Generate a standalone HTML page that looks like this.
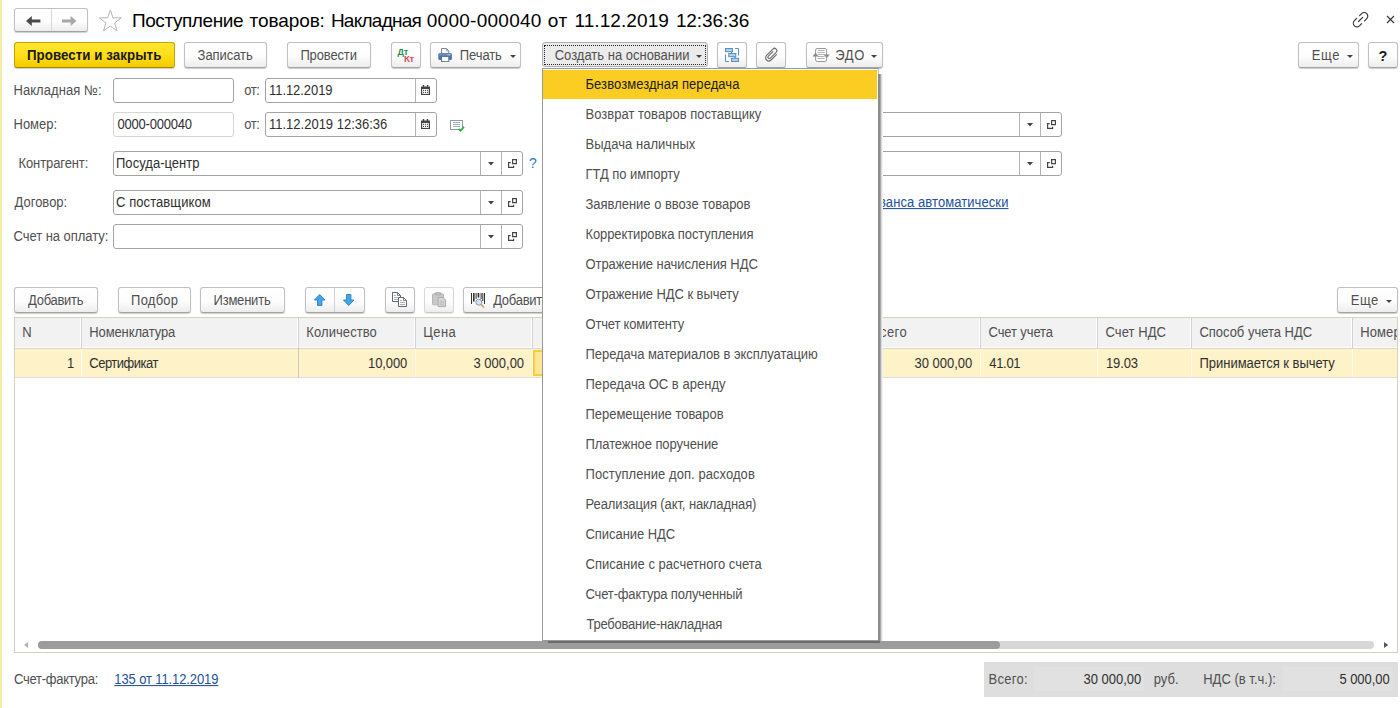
<!DOCTYPE html>
<html lang="ru">
<head>
<meta charset="utf-8">
<title>Поступление товаров</title>
<style>
*{box-sizing:border-box;margin:0;padding:0}
html,body{width:1400px;height:708px;overflow:hidden;background:#fff}
body{font-family:"Liberation Sans",sans-serif;font-size:13px;color:#333;position:relative}
.abs,svg{position:absolute}
#lstripe{left:0;top:0;width:2px;height:708px;background:#f5ecaa}
.btn{position:absolute;height:26px;top:42px;border:1px solid #c0c0c0;border-bottom-color:#a3a3a3;border-radius:3px;
 background:linear-gradient(#ffffff 0%,#fdfdfd 55%,#ededed 100%);box-shadow:0 1px 1px rgba(0,0,0,.2)}
.btn.y{background:linear-gradient(#ffe733 0%,#ffde17 50%,#f3cb00 100%);border-color:#c7a300;border-bottom-color:#a68800}
.btn.pressed{background:#ebebeb;border-color:#b0b0b0;box-shadow:none;height:25px}
.btn.dis{border-color:#d8d8d8;border-bottom-color:#c8c8c8;box-shadow:0 1px 1px rgba(0,0,0,.1)}
.t{position:absolute;white-space:nowrap;font-size:13px;line-height:16px;color:#505050;transform:scaleY(1.06);transform-origin:0 12.3px}
.caret{position:absolute;width:0;height:0;border-left:3px solid transparent;border-right:3px solid transparent;border-top:3px solid #444}
.inp{position:absolute;height:25px;border:1px solid #a3a3a3;border-radius:3px;background:#fff}
.inp.ro{border-color:#d6d6d6}
.inp .seg{position:absolute;top:0;bottom:0;border-left:1px solid #b4b4b4;width:21px}
.inp .car{position:absolute;top:10px;right:29px;width:0;height:0;border-left:2.5px solid transparent;border-right:2.5px solid transparent;border-top:3px solid #444}
a.t{color:#24509c;text-decoration:underline}
.tb{top:287px}
#grid{position:absolute;left:14px;top:317px;width:1384px;height:336px;border:1px solid #d3d1c0;background:#fff;overflow:hidden}
.hc{position:absolute;top:0;height:29px;background:#f2f2f2}
.vs{position:absolute;top:0;height:30px;width:1px;background:#d2d2d2;border:0}
.vr{position:absolute;top:32px;height:28px;width:1px;background:#fffaf0}
#menu{position:absolute;left:542px;top:68px;width:337px;height:573px;background:#fff;border:1px solid #9a9a9a;border-right-color:#bdbdbd}
#menu .sel{position:absolute;left:0;right:1px;top:1px;height:29px;background:#fbcc22}
</style>
</head>
<body>
<div id="lstripe" class="abs"></div>
<div class="btn" style="left:14px;top:8px;width:74px;height:24px;"></div>
<div class="abs" style="left:51px;top:9px;width:1px;height:22px;background:#d9d9d9"></div>
<svg style="left:26px;top:15.5px" width="15" height="10" viewBox="0 0 15 10" ><path d="M5.8 0 L0 5 L5.8 10 L5.8 6.4 L14.4 6.4 L14.4 3.6 L5.8 3.6 Z" fill="#4a4a4a"/></svg>
<svg style="left:62px;top:15.5px" width="15" height="10" viewBox="0 0 15 10" ><path d="M8.6 0 L14.4 5 L8.6 10 L8.6 6.4 L0 6.4 L0 3.6 L8.6 3.6 Z" fill="#a8a8a8"/></svg>
<svg style="left:98px;top:8px" width="25" height="25" viewBox="0 0 25 25" ><path d="M12.3 2 L15 9.8 L23.2 9.9 L16.7 14.9 L19.1 22.8 L12.3 18.1 L5.5 22.8 L7.9 14.9 L1.4 9.9 L9.6 9.8 Z" fill="#fff" stroke="#b5b5b5" stroke-width="1"/></svg>
<div class="t" style="left:132.0px;top:10px;letter-spacing:-0.43px;font-size:19px;color:#000;line-height:22px;transform:none;">Поступление</div>
<div class="t" style="left:249.6px;top:10px;letter-spacing:-0.1px;font-size:19px;color:#000;line-height:22px;transform:none;">товаров:</div>
<div class="t" style="left:330.9px;top:10px;letter-spacing:-0.74px;font-size:19px;color:#000;line-height:22px;transform:none;">Накладная</div>
<div class="t" style="left:426.8px;top:10px;letter-spacing:0.26px;font-size:19px;color:#000;line-height:22px;transform:none;">0000-000040</div>
<div class="t" style="left:547.7px;top:10px;letter-spacing:0.7px;font-size:19px;color:#000;line-height:22px;transform:none;">от</div>
<div class="t" style="left:574.4px;top:10px;letter-spacing:0.09px;font-size:19px;color:#000;line-height:22px;transform:none;">11.12.2019</div>
<div class="t" style="left:675.9px;top:10px;letter-spacing:-0.09px;font-size:19px;color:#000;line-height:22px;transform:none;">12:36:36</div>
<svg style="left:1351px;top:10px" width="19" height="19" viewBox="0 0 19 19" ><g fill="none" stroke="#3a3a3a" stroke-width="1.2" stroke-linecap="round"><path d="M8.6 5.6 L10.6 3.6 A3.6 3.6 0 0 1 15.7 8.7 L13.5 10.9"/><path d="M5.6 8.5 L3.4 10.7 A3.6 3.6 0 0 0 8.5 15.8 L10.6 13.7"/><path d="M7.5 11.5 L11.6 7.4"/></g></svg>
<svg style="left:1386px;top:15px" width="9" height="9" viewBox="0 0 9 9" ><path d="M1 1 L8 8 M8 1 L1 8" stroke="#333" stroke-width="1.1" fill="none"/></svg>
<div class="btn y" style="left:14px;width:161px"></div>
<div class="t" style="left:27.0px;top:48px;letter-spacing:0.06px;font-size:13.3px;font-weight:bold;color:#1a1a1a;">Провести и закрыть</div>
<div class="btn" style="left:184px;width:83px"></div>
<div class="t" style="left:197.6px;top:48px;letter-spacing:-0.07px;">Записать</div>
<div class="btn" style="left:287px;width:84px"></div>
<div class="t" style="left:300.4px;top:48px;letter-spacing:-0.14px;">Провести</div>
<div class="btn" style="left:391px;width:30px"></div>
<div class="abs" style="left:397.5px;top:46.5px;font-size:9px;font-weight:bold;color:#1f9156;line-height:10px;letter-spacing:-0.2px">Дт</div>
<div class="abs" style="left:404px;top:53.5px;font-size:9.5px;font-weight:bold;color:#d94b58;line-height:10px;letter-spacing:-0.3px">Кт</div>
<div class="btn" style="left:430px;width:91px"></div>
<div class="t" style="left:459.8px;top:48px;letter-spacing:-0.1px;">Печать</div>
<div class="caret" style="left:509.5px;top:54.5px"></div>
<svg style="left:438px;top:48px" width="14" height="14" viewBox="0 0 14 14" ><path d="M3.5 0.5 H8.5 L10.8 2.8 V6 H3.5 Z" fill="#fff" stroke="#7f8a99" stroke-width="1"/><path d="M8.5 0.5 V2.8 H10.8" fill="none" stroke="#7f8a99" stroke-width="0.8"/><rect x="0.3" y="5" width="13.6" height="7" rx="1.6" fill="#4d74a8"/><rect x="0.9" y="5.6" width="12.4" height="2" rx="1" fill="#6f93c4"/><rect x="9.6" y="6.3" width="1" height="1" fill="#dfe9f7"/><rect x="11.2" y="6.3" width="1" height="1" fill="#dfe9f7"/><rect x="3.5" y="8.6" width="7.3" height="5" fill="#fff" stroke="#5a6f8f" stroke-width="0.9"/></svg>
<div class="btn pressed" style="left:542px;width:166px"></div>
<div class="abs" style="left:544px;top:45px;width:162px;height:20px;border:1px dotted #222"></div>
<div class="t" style="left:554.7px;top:48px;letter-spacing:0.0px;">Создать на основании</div>
<div class="caret" style="left:696px;top:54.5px"></div>
<div class="btn" style="left:717px;width:30px"></div>
<svg style="left:725px;top:48px" width="14" height="14" viewBox="0 0 14 14" ><g fill="none" stroke="#5d8fb8" stroke-width="1"><path d="M6.5 4 V5.5 M10 9 V10.5"/><path d="M10 0.5 H13.5 V7.5"/><path d="M0.5 6.5 V13.5 H3.8"/></g><g fill="#aad3f7" stroke="#5d8fb8" stroke-width="1"><rect x="0.5" y="0.5" width="7" height="3.2"/><rect x="3.8" y="5.5" width="7" height="3.2"/><rect x="6.5" y="10.3" width="7" height="3.2"/></g></svg>
<div class="btn" style="left:756px;width:30px"></div>
<svg style="left:763px;top:47px" width="16" height="17" viewBox="0 0 16 17" ><g transform="rotate(45 8 8.5)" fill="none" stroke="#707070" stroke-width="1.2" stroke-linecap="round"><path d="M11.2 4 V11.6 A3.2 3.2 0 0 1 4.8 11.6 V2.6 A2.3 2.3 0 0 1 9.4 2.6 V10.8 A1.4 1.4 0 0 1 6.6 10.8 V4.4"/></g></svg>
<div class="btn" style="left:806px;width:77px"></div>
<div class="t" style="left:835.3px;top:48px;letter-spacing:0.65px;">ЭДО</div>
<div class="caret" style="left:870.5px;top:54.5px"></div>
<svg style="left:812px;top:48px" width="18" height="14" viewBox="0 0 18 14" ><rect x="3.6" y="0.5" width="11" height="13" rx="1.6" fill="#fff" stroke="#999" stroke-width="1"/><path d="M5.6 2.5 H12.6 M5.6 4.5 H12.6 M5.6 6.5 H12.6 M5.6 8.5 H12.6 M5.6 10.5 H12.6" stroke="#b4b4b4" stroke-width="1" fill="none"/><path d="M0.4 8.4 L3.5 4.8 L6.6 8.4 Z M11.6 6.4 L14.7 10 L17.8 6.4 Z" fill="#8a8a8a"/></svg>
<div class="btn" style="left:1298px;width:61px"></div>
<div class="t" style="left:1311.8px;top:48px;letter-spacing:0.6px;">Еще</div>
<div class="caret" style="left:1346.5px;top:55px"></div>
<div class="btn" style="left:1368px;width:30px"></div>
<div class="t" style="left:1378.6px;top:47px;letter-spacing:0.0px;font-size:14.5px;font-weight:bold;color:#1a1a1a;line-height:18px;transform:none;">?</div>
<div class="t" style="left:13.5px;top:83px;letter-spacing:0.05px;">Накладная №:</div>
<div class="inp " style="left:113px;top:78px;width:121px"></div>
<div class="t" style="left:244.3px;top:83px;letter-spacing:-0.5px;">от:</div>
<div class="inp " style="left:265px;top:78px;width:172px"><div class="seg" style="right:0"></div><svg style="left:155px;top:5.7px" width="9" height="10" viewBox="0 0 9 10" ><path d="M0 1.5 H9 V10 H0 Z" fill="#444"/><rect x="1.2" y="4" width="6.6" height="4.9" fill="#fff"/><rect x="1.8" y="0" width="1.4" height="2.4" fill="#444"/><rect x="5.8" y="0" width="1.4" height="2.4" fill="#444"/><g fill="#444"><rect x="2" y="4.8" width="1.1" height="1.1"/><rect x="4" y="4.8" width="1.1" height="1.1"/><rect x="6" y="4.8" width="1.1" height="1.1"/><rect x="2" y="6.9" width="1.1" height="1.1"/><rect x="4" y="6.9" width="1.1" height="1.1"/><rect x="6" y="6.9" width="1.1" height="1.1"/></g></svg></div>
<div class="t" style="left:269.0px;top:82.5px;letter-spacing:-0.06px;color:#303030;">11.12.2019</div>
<div class="t" style="left:13.5px;top:117px;letter-spacing:0.0px;">Номер:</div>
<div class="inp ro" style="left:113px;top:112px;width:121px"></div>
<div class="t" style="left:117.5px;top:116.5px;letter-spacing:-0.22px;color:#303030;">0000-000040</div>
<div class="t" style="left:244.3px;top:117px;letter-spacing:-0.5px;">от:</div>
<div class="inp " style="left:265px;top:112px;width:172px"><div class="seg" style="right:0"></div><svg style="left:155px;top:5.7px" width="9" height="10" viewBox="0 0 9 10" ><path d="M0 1.5 H9 V10 H0 Z" fill="#444"/><rect x="1.2" y="4" width="6.6" height="4.9" fill="#fff"/><rect x="1.8" y="0" width="1.4" height="2.4" fill="#444"/><rect x="5.8" y="0" width="1.4" height="2.4" fill="#444"/><g fill="#444"><rect x="2" y="4.8" width="1.1" height="1.1"/><rect x="4" y="4.8" width="1.1" height="1.1"/><rect x="6" y="4.8" width="1.1" height="1.1"/><rect x="2" y="6.9" width="1.1" height="1.1"/><rect x="4" y="6.9" width="1.1" height="1.1"/><rect x="6" y="6.9" width="1.1" height="1.1"/></g></svg></div>
<div class="t" style="left:269.0px;top:116.5px;letter-spacing:0.0px;color:#303030;">11.12.2019 12:36:36</div>
<svg style="left:450px;top:120px" width="16" height="13" viewBox="0 0 16 13" ><rect x="0.5" y="0.5" width="12" height="9" fill="#fff" stroke="#8f9aab" stroke-width="1"/><path d="M3 2.5 H10 M3 4.5 H10 M3 6.5 H10" stroke="#a3acb9" stroke-width="1" fill="none"/><path d="M8.6 8.8 L10.5 10.8 L14 6.9" stroke="#2fae3b" stroke-width="1.7" fill="none"/></svg>
<div class="t" style="left:18.5px;top:156px;letter-spacing:-0.1px;">Контрагент:</div>
<div class="inp " style="left:113px;top:151px;width:410px"><div class="seg" style="right:21px"></div><div class="seg" style="right:0"></div><svg style="left:374px;top:10px" width="6" height="4" viewBox="0 0 6 4" ><path d="M0 0 H6 L3 3.4 Z" fill="#444"/></svg><svg style="left:394px;top:7px" width="9" height="9" viewBox="0 0 9 9" ><path d="M4.6 0.6 H8.4 V4.6 H4.6 Z M2.7 3.6 H0.6 V8.4 H5.6 V6.7" fill="none" stroke="#444" stroke-width="1.15"/></svg></div>
<div class="t" style="left:116.0px;top:155.5px;letter-spacing:0.03px;color:#303030;">Посуда-центр</div>
<div class="t" style="left:529.0px;top:155px;letter-spacing:0.0px;font-size:14px;color:#2f7bbf;">?</div>
<div class="t" style="left:14.5px;top:195px;letter-spacing:0.0px;">Договор:</div>
<div class="inp " style="left:113px;top:190px;width:410px"><div class="seg" style="right:21px"></div><div class="seg" style="right:0"></div><svg style="left:374px;top:10px" width="6" height="4" viewBox="0 0 6 4" ><path d="M0 0 H6 L3 3.4 Z" fill="#444"/></svg><svg style="left:394px;top:7px" width="9" height="9" viewBox="0 0 9 9" ><path d="M4.6 0.6 H8.4 V4.6 H4.6 Z M2.7 3.6 H0.6 V8.4 H5.6 V6.7" fill="none" stroke="#444" stroke-width="1.15"/></svg></div>
<div class="t" style="left:116.0px;top:194.5px;letter-spacing:0.08px;color:#303030;">С поставщиком</div>
<div class="t" style="left:13.5px;top:229px;letter-spacing:-0.04px;">Счет на оплату:</div>
<div class="inp " style="left:113px;top:224px;width:410px"><div class="seg" style="right:21px"></div><div class="seg" style="right:0"></div><svg style="left:374px;top:10px" width="6" height="4" viewBox="0 0 6 4" ><path d="M0 0 H6 L3 3.4 Z" fill="#444"/></svg><svg style="left:394px;top:7px" width="9" height="9" viewBox="0 0 9 9" ><path d="M4.6 0.6 H8.4 V4.6 H4.6 Z M2.7 3.6 H0.6 V8.4 H5.6 V6.7" fill="none" stroke="#444" stroke-width="1.15"/></svg></div>
<div class="inp " style="left:660px;top:112px;width:402px"><div class="seg" style="right:21px"></div><div class="seg" style="right:0"></div><svg style="left:366px;top:10px" width="6" height="4" viewBox="0 0 6 4" ><path d="M0 0 H6 L3 3.4 Z" fill="#444"/></svg><svg style="left:386px;top:7px" width="9" height="9" viewBox="0 0 9 9" ><path d="M4.6 0.6 H8.4 V4.6 H4.6 Z M2.7 3.6 H0.6 V8.4 H5.6 V6.7" fill="none" stroke="#444" stroke-width="1.15"/></svg></div>
<div class="inp " style="left:660px;top:151px;width:402px"><div class="seg" style="right:21px"></div><div class="seg" style="right:0"></div><svg style="left:366px;top:10px" width="6" height="4" viewBox="0 0 6 4" ><path d="M0 0 H6 L3 3.4 Z" fill="#444"/></svg><svg style="left:386px;top:7px" width="9" height="9" viewBox="0 0 9 9" ><path d="M4.6 0.6 H8.4 V4.6 H4.6 Z M2.7 3.6 H0.6 V8.4 H5.6 V6.7" fill="none" stroke="#444" stroke-width="1.15"/></svg></div>
<a class="t" style="right:520px;top:195px">Срок 11.12.2019, зачет а</a>
<a class="t" style="left:879.0px;top:195px;letter-spacing:0.08px;">ванса автоматически</a>
<div class="btn tb" style="left:14px;width:84px"></div>
<div class="t" style="left:28.0px;top:293px;letter-spacing:-0.27px;">Добавить</div>
<div class="btn tb" style="left:118px;width:73px"></div>
<div class="t" style="left:131.1px;top:293px;letter-spacing:0.22px;">Подбор</div>
<div class="btn tb" style="left:200px;width:85px"></div>
<div class="t" style="left:213.5px;top:293px;letter-spacing:-0.21px;">Изменить</div>
<div class="btn tb" style="left:305px;width:60px"></div><div class="abs" style="left:334px;top:288px;width:1px;height:24px;background:#d0d0d0"></div>
<svg style="left:314px;top:294px" width="12" height="12" viewBox="0 0 12 12" ><path d="M5.7 0.5 L11 6 L7.9 6 L7.9 11.5 L3.5 11.5 L3.5 6 L0.4 6 Z" fill="#41a5e6" stroke="#2b82c4" stroke-width="0.9" stroke-linejoin="round"/></svg>
<svg style="left:343px;top:294px" width="12" height="12" viewBox="0 0 12 12" ><g transform="rotate(180 5.7 6)"><path d="M5.7 0.5 L11 6 L7.9 6 L7.9 11.5 L3.5 11.5 L3.5 6 L0.4 6 Z" fill="#41a5e6" stroke="#2b82c4" stroke-width="0.9" stroke-linejoin="round"/></g></svg>
<div class="btn tb" style="left:385px;width:30px"></div>
<svg style="left:392px;top:292px" width="16" height="16" viewBox="0 0 16 16" ><g><path d="M0.5 0.5 H5.5 L8.5 3.5 V9.5 H0.5 Z" fill="#fff" stroke="#5f6772" stroke-width="1"/><path d="M5.5 0.5 V3.5 H8.5" fill="none" stroke="#5f6772" stroke-width="0.8"/><path d="M2 3.5 H4 M2 5.5 H7 M2 7.5 H7" stroke="#a9b0b9" stroke-width="1"/></g><g transform="translate(6 5)"><path d="M0.5 0.5 H5.5 L8.5 3.5 V9.5 H0.5 Z" fill="#fff" stroke="#5f6772" stroke-width="1"/><path d="M5.5 0.5 V3.5 H8.5" fill="none" stroke="#5f6772" stroke-width="0.8"/><path d="M2 3.5 H4 M2 5.5 H7 M2 7.5 H7" stroke="#a9b0b9" stroke-width="1"/></g></svg>
<div class="btn tb dis" style="left:424px;width:30px"></div>
<svg style="left:432px;top:292px" width="15" height="16" viewBox="0 0 15 16" ><rect x="0.5" y="1.8" width="11" height="11" rx="1" fill="#c9c9c9" stroke="#b5b5b5"/><rect x="3.3" y="0.4" width="5.4" height="2.6" rx="0.8" fill="#bdbdbd" stroke="#a9a9a9" stroke-width="0.7"/><g transform="translate(5.6 5)"><path d="M0.5 0.5 H5.5 L8 3 V9.6 H0.5 Z" fill="#d6d6d6" stroke="#adadad" stroke-width="1"/><path d="M2 4.2 H6.5 M2 6 H6.5 M2 7.8 H6.5" stroke="#b8b8b8" stroke-width="0.8"/></g></svg>
<div class="btn tb" style="left:463px;width:170px"></div>
<div class="t" style="left:493.2px;top:293px;letter-spacing:-0.27px;">Добавить</div>
<div class="t" style="left:552px;top:293px">по штрихкоду</div>
<svg style="left:470px;top:293px" width="16" height="15" viewBox="0 0 16 15" ><g fill="#333"><rect x="1" y="0" width="1" height="11"/><rect x="3" y="0" width="1.6" height="8.5"/><rect x="5.6" y="0" width="1" height="6"/><rect x="7.6" y="0" width="1.7" height="4.5"/><rect x="10.6" y="0" width="1" height="6"/><rect x="12.3" y="0" width="1" height="8"/><rect x="14" y="0" width="1" height="11"/></g><path d="M11 11.4 L13.6 14" stroke="#c49a6a" stroke-width="1.5" stroke-linecap="round"/><circle cx="8.8" cy="9.2" r="3" fill="#cfe4fb" stroke="#8a8f99" stroke-width="0.9"/></svg>
<div class="btn tb" style="left:1337px;width:61px"></div>
<div class="t" style="left:1350.8px;top:293px;letter-spacing:0.45px;">Еще</div>
<div class="caret" style="left:1386px;top:300px"></div>
<div id="grid">
<div class="abs" style="left:0;top:30px;width:1400px;height:1px;background:#d6d6d6"></div>
<div class="abs" style="left:0;top:31px;width:1400px;height:28px;background:#fef2c8"></div>
<div class="abs" style="left:0;top:59px;width:1400px;height:1px;background:#dedede"></div>
<div class="hc" style="left:0px;width:65px"></div>
<div class="vs" style="left:66px"></div>
<div class="vr" style="left:66px;top:31px"></div>
<div class="hc" style="left:67px;width:215px"></div>
<div class="vs" style="left:283px"></div>
<div class="vr" style="left:283px;top:30px;height:30px;background:#c9c9c9"></div>
<div class="hc" style="left:284px;width:115px"></div>
<div class="vs" style="left:400px"></div>
<div class="vr" style="left:400px;top:31px"></div>
<div class="hc" style="left:401px;width:115px"></div>
<div class="vs" style="left:517px"></div>
<div class="vr" style="left:517px;top:31px"></div>
<div class="hc" style="left:518px;width:108px"></div>
<div class="vs" style="left:627px"></div>
<div class="vr" style="left:627px;top:31px"></div>
<div class="hc" style="left:628px;width:108px"></div>
<div class="vs" style="left:737px"></div>
<div class="vr" style="left:737px;top:31px"></div>
<div class="hc" style="left:738px;width:109px"></div>
<div class="vs" style="left:848px"></div>
<div class="vr" style="left:848px;top:31px"></div>
<div class="hc" style="left:849px;width:115px"></div>
<div class="vs" style="left:965px"></div>
<div class="vr" style="left:965px;top:31px"></div>
<div class="hc" style="left:966px;width:115px"></div>
<div class="vs" style="left:1082px"></div>
<div class="vr" style="left:1082px;top:31px"></div>
<div class="hc" style="left:1083px;width:92px"></div>
<div class="vs" style="left:1176px"></div>
<div class="vr" style="left:1176px;top:31px"></div>
<div class="hc" style="left:1177px;width:159px"></div>
<div class="vs" style="left:1337px"></div>
<div class="vr" style="left:1337px;top:31px"></div>
<div class="hc" style="left:1338px;width:146px"></div>
<div class="vs" style="left:1485px"></div>
<div class="vr" style="left:1485px;top:31px"></div>
<div class="abs" style="left:518px;top:32px;width:109px;height:26px;border:2px solid #f6cb3c;background:#fde795"></div>
<div class="abs" style="left:23px;top:323px;width:1336px;height:8px;border-radius:4px;background:#d7d7d7"></div>
<div class="abs" style="left:23px;top:323px;width:962px;height:8px;border-radius:4px;background:#9c9c9c"></div>
<svg style="left:9px;top:324px" width="5" height="6"><path d="M4.2 0 L0 3 L4.2 6Z" fill="#b3b3b3"/></svg>
<svg style="left:1369px;top:324px" width="5" height="6"><path d="M0 0 L4.2 3 L0 6Z" fill="#555"/></svg>
</div>
<div class="t" style="left:22.3px;top:325px;letter-spacing:0.0px;">N</div>
<div class="t" style="left:89.3px;top:325px;letter-spacing:-0.12px;">Номенклатура</div>
<div class="t" style="left:306.3px;top:325px;letter-spacing:0.08px;">Количество</div>
<div class="t" style="left:423.3px;top:325px;letter-spacing:0.4px;">Цена</div>
<div class="t" style="left:871.0px;top:325px;letter-spacing:0.4px;">Всего</div>
<div class="t" style="left:988.5px;top:325px;letter-spacing:-0.11px;">Счет учета</div>
<div class="t" style="left:1105.5px;top:325px;letter-spacing:0.07px;">Счет НДС</div>
<div class="t" style="left:1199.4px;top:325px;letter-spacing:-0.01px;">Способ учета НДС</div>
<div class="abs" style="left:0;top:318px;width:1397px;height:30px;overflow:hidden"><div class="t" style="left:1360.3px;top:7px;letter-spacing:0.09px;">Номер ГТД</div></div>
<div class="t" style="left:67.0px;top:356px;letter-spacing:0.0px;color:#303030;">1</div>
<div class="t" style="left:89.3px;top:356px;letter-spacing:-0.5px;color:#303030;">Сертификат</div>
<div class="t" style="left:368.0px;top:356px;letter-spacing:-0.1px;color:#303030;">10,000</div>
<div class="t" style="left:473.5px;top:356px;letter-spacing:0.0px;color:#303030;">3 000,00</div>
<div class="t" style="left:914.5px;top:356px;letter-spacing:0.0px;color:#303030;">30 000,00</div>
<div class="t" style="left:989.3px;top:356px;letter-spacing:-0.32px;color:#303030;">41.01</div>
<div class="t" style="left:1106.0px;top:356px;letter-spacing:-0.12px;color:#303030;">19.03</div>
<div class="t" style="left:1199.5px;top:356px;letter-spacing:-0.03px;color:#303030;">Принимается к вычету</div>
<div class="t" style="left:13.9px;top:672px;letter-spacing:-0.25px;">Счет-фактура:</div>
<a class="t" style="left:114.3px;top:672px;letter-spacing:-0.11px;">135 от 11.12.2019</a>
<div class="abs" style="left:984px;top:662px;width:414px;height:35px;background:#dedede"></div>
<div class="abs" style="left:1034px;top:667px;width:110px;height:24px;background:#e1e1e1"></div><div class="abs" style="left:1283px;top:667px;width:110px;height:24px;background:#e1e1e1"></div>
<div class="t" style="left:988.5px;top:672px;letter-spacing:0.3px;">Всего:</div>
<div class="t" style="left:1083.5px;top:672px;letter-spacing:0.0px;color:#303030;">30 000,00</div>
<div class="t" style="left:1153.7px;top:672px;letter-spacing:0.03px;">руб.</div>
<div class="t" style="left:1203.2px;top:672px;letter-spacing:0.02px;">НДС (в т.ч.):</div>
<div class="t" style="left:1339.5px;top:672px;letter-spacing:-0.07px;color:#303030;">5 000,00</div>
<div class="abs" style="left:548px;top:641px;width:332px;height:2px;background:#6b6b6b"></div>
<div id="menu"><div class="sel"></div></div>
<div class="abs" style="left:878px;top:74px;width:5px;height:567px;background:linear-gradient(to right,#8c8c8c 0,#8c8c8c 2px,#a9a9a9 2px,#a9a9a9 3px,#dadada 3px,#dadada 4px,#f3f3f3 4px)"></div>
<div class="t" style="left:585.5px;top:77px;letter-spacing:0.07px;color:#1c1c1c;">Безвозмездная передача</div>
<div class="t" style="left:585.5px;top:107px;letter-spacing:0.02px;color:#505050;">Возврат товаров поставщику</div>
<div class="t" style="left:585.5px;top:137px;letter-spacing:0.04px;color:#505050;">Выдача наличных</div>
<div class="t" style="left:585.5px;top:167px;letter-spacing:-0.04px;color:#505050;">ГТД по импорту</div>
<div class="t" style="left:585.5px;top:197px;letter-spacing:-0.02px;color:#505050;">Заявление о ввозе товаров</div>
<div class="t" style="left:585.5px;top:227px;letter-spacing:-0.1px;color:#505050;">Корректировка поступления</div>
<div class="t" style="left:585.5px;top:257px;letter-spacing:-0.07px;color:#505050;">Отражение начисления НДС</div>
<div class="t" style="left:585.5px;top:287px;letter-spacing:-0.07px;color:#505050;">Отражение НДС к вычету</div>
<div class="t" style="left:585.5px;top:317px;letter-spacing:-0.18px;color:#505050;">Отчет комитенту</div>
<div class="t" style="left:585.5px;top:347px;letter-spacing:-0.05px;color:#505050;">Передача материалов в эксплуатацию</div>
<div class="t" style="left:585.5px;top:377px;letter-spacing:0.03px;color:#505050;">Передача ОС в аренду</div>
<div class="t" style="left:585.5px;top:407px;letter-spacing:-0.03px;color:#505050;">Перемещение товаров</div>
<div class="t" style="left:585.5px;top:437px;letter-spacing:-0.08px;color:#505050;">Платежное поручение</div>
<div class="t" style="left:585.5px;top:467px;letter-spacing:0.06px;color:#505050;">Поступление доп. расходов</div>
<div class="t" style="left:585.5px;top:497px;letter-spacing:-0.1px;color:#505050;">Реализация (акт, накладная)</div>
<div class="t" style="left:585.5px;top:527px;letter-spacing:-0.05px;color:#505050;">Списание НДС</div>
<div class="t" style="left:585.5px;top:557px;letter-spacing:0.02px;color:#505050;">Списание с расчетного счета</div>
<div class="t" style="left:585.5px;top:587px;letter-spacing:-0.16px;color:#505050;">Счет-фактура полученный</div>
<div class="t" style="left:586.5px;top:617px;letter-spacing:-0.24px;color:#505050;">Требование-накладная</div>
</body>
</html>
